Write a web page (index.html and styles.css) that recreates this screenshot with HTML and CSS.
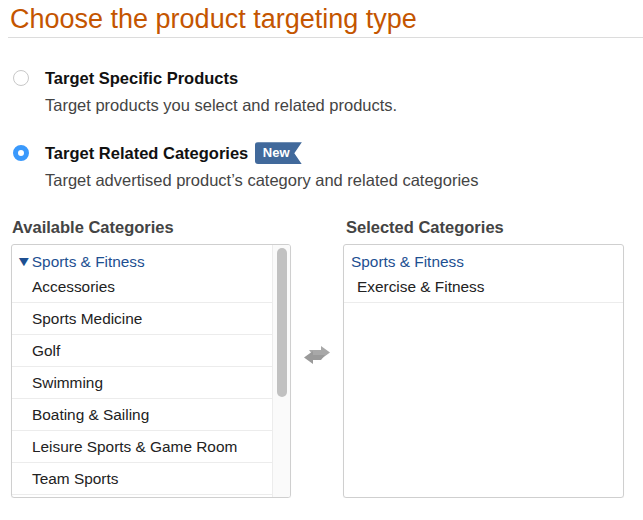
FILE: index.html
```html
<!DOCTYPE html>
<html lang="en">
<head>
    <meta charset="UTF-8">
    <meta name="viewport" content="width=device-width, initial-scale=1.0">
    <title>Product targeting</title>
    <link rel="stylesheet" href="styles.css">
</head>
<body>
    <div class="page">
        <h1 class="title">Choose the product targeting type</h1>

        <div class="options">
            <label class="option">
                <span class="radio"></span>
                <div>
                    <div class="option-name">Target Specific Products</div>
                    <div class="option-desc">Target products you select and related products.</div>
                </div>
            </label>
            <label class="option">
                <span class="radio checked"></span>
                <div>
                    <div class="option-name">Target Related Categories <span class="badge">New</span></div>
                    <div class="option-desc">Target advertised product’s category and related categories</div>
                </div>
            </label>
        </div>

        <div class="picker">
            <div class="column">
                <h3 class="col-title">Available Categories</h3>
                <div class="box box-left">
                    <div class="list">
                        <div class="group"><span class="caret">▼</span>Sports &amp; Fitness</div>
                        <div class="item first">Accessories</div>
                        <div class="item">Sports Medicine</div>
                        <div class="item">Golf</div>
                        <div class="item">Swimming</div>
                        <div class="item">Boating &amp; Sailing</div>
                        <div class="item">Leisure Sports &amp; Game Room</div>
                        <div class="item">Team Sports</div>
                    </div>
                    <div class="scrollbar"><div class="thumb"></div></div>
                </div>
            </div>

            <div class="swap">
                <svg width="30" height="20" viewBox="0 0 30 20">
                    <path d="M7 5 H19 V1 L28 7.5 L19 14 V10 H11 Z" fill="#a8a8a8"/>
                    <path d="M23 10 H11 V6 L2 12.5 L11 19 V15 H19 Z" fill="#9a9a9a"/>
                </svg>
            </div>

            <div class="column">
                <h3 class="col-title right">Selected Categories</h3>
                <div class="box box-right">
                    <div class="group sel">Sports &amp; Fitness</div>
                    <div class="item sel first">Exercise &amp; Fitness</div>
                </div>
            </div>
        </div>
    </div>
</body>
</html>
```

FILE: styles.css
```css
*{
    margin: 0;
    padding: 0;
    box-sizing: border-box;
}
body{
    font-family: "Liberation Sans", Arial, sans-serif;
    color: #111;
    background: #fff;
}
.page{
    padding-left: 8px;
    width: 643px;
}
.title{
    font-size: 27px;
    font-weight: normal;
    color: #c45500;
    line-height: 30px;
    padding: 4px 0 3px 2px;
    border-bottom: 1px solid #dcdcdc;
}
.options{
    padding: 28px 0 0 5px;
}
.option{
    display: flex;
    gap: 16px;
    margin-bottom: 25px;
}
.radio{
    width: 16px;
    height: 16px;
    margin-top: 4px;
    border: 1px solid #c8c8c8;
    border-radius: 50%;
    background: #fff;
    flex-shrink: 0;
}
.radio.checked{
    border: 5px solid #3a99fc;
    background: #fff;
}
.option-name{
    font-size: 16.5px;
    font-weight: bold;
    line-height: 24px;
}
.option-desc{
    font-size: 16.5px;
    color: #444;
    line-height: 22px;
    margin-top: 4px;
}
.badge{
    display: inline-block;
    vertical-align: middle;
    margin-left: 2px;
    margin-top: -3px;
    height: 22px;
    width: 47px;
    padding-left: 8px;
    background: #41699b;
    color: #fff;
    font-size: 13px;
    line-height: 22px;
    border-radius: 3px 0 0 3px;
    clip-path: polygon(0 0, 100% 0, 84% 50%, 100% 100%, 0 100%);
}
.picker{
    display: flex;
    align-items: flex-start;
    margin-top: 1px;
    padding-left: 3px;
}
.col-title{
    font-size: 16.5px;
    font-weight: bold;
    color: #444;
    line-height: 22px;
    padding-left: 1px;
    margin-bottom: 6px;
}
.col-title.right{
    padding-left: 3px;
}
.box{
    width: 280px;
    height: 254px;
    border: 1px solid #cfcfcf;
    border-radius: 3px;
    box-shadow: 0 1px 1px rgba(0,0,0,0.06);
    font-size: 15.4px;
    overflow: hidden;
}
.box-left{
    display: flex;
}
.box-right{
    width: 281px;
}
.list{
    flex: 1;
    padding-top: 7px;
}
.group{
    color: #1d4f91;
    line-height: 20px;
    padding-left: 5px;
}
.caret{
    display: inline-block;
    font-size: 14px;
    margin-right: 1px;
    transform: scaleX(1.2);
    position: relative;
    top: -1px;
}
.item{
    line-height: 31px;
    padding-left: 20px;
    color: #222;
    border-bottom: 1px solid #ececec;
}
.item.first{
    line-height: 30px;
}
.group.sel{
    padding-left: 7px;
    margin-top: 7px;
}
.item.sel{
    padding-left: 13px;
}
.scrollbar{
    width: 18px;
    border-left: 1px solid #ececec;
    background: #fafafa;
    padding: 3px 0 0 4px;
}
.thumb{
    width: 10px;
    height: 149px;
    border-radius: 5px;
    background: #c1c1c1;
}
.swap{
    width: 52px;
    display: flex;
    justify-content: center;
    padding-top: 129px;
}
```
